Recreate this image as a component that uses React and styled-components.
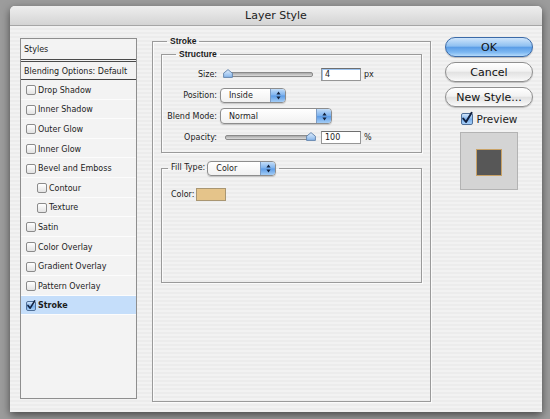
import React from "react";
import styled, { createGlobalStyle } from "styled-components";

const GlobalStyle = createGlobalStyle`
  html, body { margin: 0; padding: 0; }
  body {
    width: 550px;
    height: 419px;
    overflow: hidden;
    background: #9c9c9c;
    font-family: "DejaVu Sans", "Liberation Sans", sans-serif;
    color: #1c1c1c;
  }
`;

const Window = styled.div`
  margin: 6px 0 0 10px;
  width: 532px;
  height: 406px;
  border-radius: 5px 5px 0 0;
  overflow: hidden;
  background: repeating-linear-gradient(to bottom, #f2f2f2 0, #f2f2f2 2px, #ececec 2px, #ececec 4px);
  box-shadow: 0 3px 9px rgba(0, 0, 0, 0.55);
`;

const TitleBar = styled.div`
  height: 19px;
  border-bottom: 1px solid #a6a6a6;
  background: linear-gradient(#eeeeee, #d4d4d4);
  display: flex;
  align-items: center;
  justify-content: center;
  font-size: 11px;
  color: #222;
`;

const Body = styled.div`
  display: flex;
  align-items: flex-start;
  padding: 12px 0 0 10px;
`;

/* ---------- left styles list ---------- */

const StylesList = styled.div`
  flex-shrink: 0;
  width: 117px;
  height: 361px;
  box-sizing: border-box;
  border: 1px solid #8e8e8e;
  background: #f3f3f3;
  font-size: 8px;
`;

const HeaderRow = styled.div`
  display: flex;
  align-items: center;
  box-sizing: border-box;
  padding: 1px 0 0 3px;
  height: ${(p) => (p.$top ? "23px" : "18px")};
  border-bottom: ${(p) => (p.$top ? "3px double #4a4a4a" : "1px solid #444")};
`;

const StyleRow = styled.div`
  display: flex;
  align-items: center;
  box-sizing: border-box;
  height: 19.6px;
  padding: 2px 0 0 ${(p) => (p.$indent ? "16px" : "5px")};
  border-bottom: 1px solid #fcfcfc;
  background: ${(p) => (p.$selected ? "#c5defa" : "transparent")};
  font-weight: ${(p) => (p.$selected ? "bold" : "normal")};
`;

const Box = styled.span`
  flex-shrink: 0;
  position: relative;
  display: inline-block;
  width: ${(p) => p.$size || 8}px;
  height: ${(p) => p.$size || 8}px;
  margin-right: ${(p) => p.$gap || 2}px;
  border: 1px solid ${(p) => (p.$checked ? "#4f6f98" : "#8b8b8b")};
  border-radius: 2px;
  background: ${(p) =>
    p.$checked
      ? "linear-gradient(#d2e6fb, #78afec 55%, #a9d0f8)"
      : "linear-gradient(#ffffff, #e3e3e3)"};
`;

const CheckMark = styled.svg`
  position: absolute;
  left: 0;
  top: -2px;
  overflow: visible;
`;

const Checkbox = ({ checked, size, gap }) => (
  <Box $checked={checked} $size={size} $gap={gap}>
    {checked && (
      <CheckMark width={size || 8} height={(size || 8) + 2} viewBox="0 0 10 12">
        <path d="M1.2 6.5 L4 10 L9.6 0.8" fill="none" stroke="#12213f" strokeWidth="2" strokeLinecap="round" strokeLinejoin="round" />
      </CheckMark>
    )}
  </Box>
);

/* ---------- middle group boxes ---------- */

const Main = styled.div`
  flex-shrink: 0;
  margin: -3px 0 0 15px;
  width: 279px;
`;

const Group = styled.fieldset`
  margin: ${(p) => p.$mt || 0}px 0 0 0;
  padding: 0;
  min-inline-size: 0;
  box-sizing: border-box;
  height: ${(p) => (p.$h ? `${p.$h}px` : "auto")};
  border: 1px solid #9a9a9a;
  box-shadow: inset 1px 1px 0 #fbfbfb, 1px 1px 0 #fbfbfb;
`;

const Legend = styled.legend`
  margin-left: ${(p) => p.$ml}px;
  padding: 0 3px;
  display: flex;
  align-items: center;
  gap: 2px;
  line-height: ${(p) => p.$lh}px;
  font-family: "Liberation Sans", Arial, sans-serif;
  font-weight: bold;
  font-size: 8.5px;
`;

const LegendLabel = styled.span`
  font-family: "DejaVu Sans", sans-serif;
  font-weight: normal;
  font-size: 8px;
`;

const Inner = styled.div`
  padding: 1.5px 8px 0 8px;
`;

const Rows = styled.div`
  display: flex;
  flex-direction: column;
  gap: 5px;
  padding: 6.5px 0 7px 0;
`;

const Row = styled.div`
  display: flex;
  align-items: center;
  height: 16px;
`;

const Label = styled.span`
  width: 55px;
  margin-right: 3px;
  text-align: right;
  font-size: 8px;
  white-space: nowrap;
`;

const SliderWrap = styled.div`
  position: relative;
  width: 99px;
  height: 16px;
  display: flex;
  align-items: center;
`;

const Track = styled.div`
  flex: 1;
  margin: 1px 6px 0 5px;
  height: 3px;
  border-radius: 2px;
  border: 1px solid #8a8a8a;
  background: linear-gradient(#a9a9a9, #dcdcdc);
`;

const Thumb = styled.svg`
  position: absolute;
  top: 3px;
`;

const Slider = ({ pos }) => (
  <SliderWrap>
    <Track />
    <Thumb width="10" height="9" viewBox="0 0 10 9" style={{ left: 3 + pos * 83 }}>
      <defs>
        <linearGradient id="thumbg" x1="0" y1="0" x2="0" y2="1">
          <stop offset="0" stopColor="#e1eefc" />
          <stop offset="1" stopColor="#86b6ec" />
        </linearGradient>
      </defs>
      <path d="M5 0.6 L9.4 4.2 L9.4 8.4 L0.6 8.4 L0.6 4.2 Z" fill="url(#thumbg)" stroke="#5f80a8" strokeWidth="0.9" />
    </Thumb>
  </SliderWrap>
);

const Field = styled.input`
  width: 40px;
  height: 13px;
  box-sizing: border-box;
  margin: 0 0 0 2px;
  padding: 0 3px;
  border: 1px solid #969696;
  border-top-color: #6f6f6f;
  background: #fff;
  font-family: "DejaVu Sans", sans-serif;
  font-size: 8px;
  color: #1c1c1c;
  outline: none;
  box-shadow: ${(p) => (p.$focus ? "inset 1px 0 0 #9cc3ef, inset 0 1px 0 #9cc3ef" : "none")};
`;

const Unit = styled.span`
  margin-left: 3px;
  font-size: 8px;
`;

const SelectBox = styled.div`
  width: ${(p) => p.$w}px;
  height: ${(p) => p.$h || 16}px;
  box-sizing: border-box;
  display: flex;
  align-items: stretch;
  overflow: hidden;
  border: 1px solid #8d8d8d;
  border-radius: 4px;
  background: linear-gradient(#ffffff, #f1f1f1);
  box-shadow: 0 1px 1px rgba(0, 0, 0, 0.18);
  font-family: "DejaVu Sans", sans-serif;
  font-weight: normal;
  font-size: 8px;
  line-height: normal;
`;

const SelectText = styled.span`
  flex: 1;
  display: flex;
  align-items: center;
  padding-left: 8px;
`;

const SelectArrows = styled.span`
  width: 14px;
  display: flex;
  align-items: center;
  justify-content: center;
  border-left: 1px solid #7d9cc4;
  background: linear-gradient(#c3ddf8, #7db2ee 48%, #5b9be6 52%, #a4cdf6);
`;

const Select = ({ value, w, h }) => (
  <SelectBox $w={w} $h={h}>
    <SelectText>{value}</SelectText>
    <SelectArrows>
      <svg width="5" height="9" viewBox="0 0 5 9">
        <path d="M2.5 0.5 L4.6 3.4 L0.4 3.4 Z M2.5 8.5 L4.6 5.6 L0.4 5.6 Z" fill="#13233f" />
      </svg>
    </SelectArrows>
  </SelectBox>
);

const FillBody = styled.div`
  height: 106px;
  box-sizing: border-box;
  padding: 12px 9px 0 9px;
  display: flex;
  align-items: flex-start;
  font-size: 8px;
`;

const ColorLabel = styled.span`
  line-height: 13px;
  margin-right: 2px;
`;

const Swatch = styled.span`
  width: 30px;
  height: 13px;
  box-sizing: border-box;
  border: 1px solid #a99672;
  background: ${(p) => p.$color};
`;

/* ---------- right column ---------- */

const Side = styled.div`
  flex-shrink: 0;
  margin: -1px 0 0 14px;
  width: 88px;
  display: flex;
  flex-direction: column;
  align-items: center;
  gap: 5px;
`;

const Button = styled.button`
  width: 88px;
  height: 20px;
  padding: 0;
  border-radius: 10px;
  font-family: "DejaVu Sans", sans-serif;
  font-size: 11px;
  color: #111;
  border: 1px solid ${(p) => (p.$primary ? "#3b6aa8" : "#8f8f8f")};
  background: ${(p) =>
    p.$primary
      ? "linear-gradient(#cfe5fb 0%, #8fc0f1 45%, #5b9de7 52%, #7fb9f2 80%, #b4dafb 100%)"
      : "linear-gradient(#ffffff 0%, #f2f2f2 45%, #e2e2e2 52%, #efefef 80%, #fbfbfb 100%)"};
  box-shadow: 0 1px 1px rgba(0, 0, 0, 0.22);
`;

const PreviewRow = styled.div`
  margin-top: 1px;
  display: flex;
  align-items: center;
  height: 12px;
  font-size: 10.5px;
`;

const PreviewSwatch = styled.div`
  margin-top: 2px;
  width: 58px;
  height: 58px;
  box-sizing: border-box;
  border: 1px solid #b3b3b3;
  background: #d4d4d4;
  display: flex;
  align-items: center;
  justify-content: center;
`;

const PreviewInner = styled.div`
  width: 26px;
  height: 27px;
  margin-top: 2px;
  box-sizing: border-box;
  border: 1px solid #c9a266;
  background: #575757;
`;

const styleItems = [
  { name: "Drop Shadow" },
  { name: "Inner Shadow" },
  { name: "Outer Glow" },
  { name: "Inner Glow" },
  { name: "Bevel and Emboss" },
  { name: "Contour", indent: true },
  { name: "Texture", indent: true },
  { name: "Satin" },
  { name: "Color Overlay" },
  { name: "Gradient Overlay" },
  { name: "Pattern Overlay" },
  { name: "Stroke", checked: true, selected: true },
];

export default function App() {
  return (
    <>
      <GlobalStyle />
      <Window>
        <TitleBar>Layer Style</TitleBar>
        <Body>
          <StylesList>
            <HeaderRow $top>Styles</HeaderRow>
            <HeaderRow>Blending Options: Default</HeaderRow>
            {styleItems.map((it) => (
              <StyleRow key={it.name} $indent={it.indent} $selected={it.selected}>
                <Checkbox checked={it.checked} />
                {it.name}
              </StyleRow>
            ))}
          </StylesList>

          <Main>
            <Group $h={367}>
              <Legend $ml={14} $lh={12}>Stroke</Legend>
              <Inner>
                <Group>
                  <Legend $ml={14} $lh={11}>Structure</Legend>
                  <Rows>
                    <Row>
                      <Label>Size:</Label>
                      <Slider pos={0} />
                      <Field $focus defaultValue="4" readOnly />
                      <Unit>px</Unit>
                    </Row>
                    <Row>
                      <Label>Position:</Label>
                      <Select value="Inside" w={66} h={15} />
                    </Row>
                    <Row>
                      <Label>Blend Mode:</Label>
                      <Select value="Normal" w={112} />
                    </Row>
                    <Row>
                      <Label>Opacity:</Label>
                      <Slider pos={1} />
                      <Field defaultValue="100" readOnly />
                      <Unit>%</Unit>
                    </Row>
                  </Rows>
                </Group>
                <Group $mt={7}>
                  <Legend $ml={6} $lh={16}>
                    <LegendLabel>Fill Type:</LegendLabel>
                    <Select value="Color" w={69} h={15} />
                  </Legend>
                  <FillBody>
                    <ColorLabel>Color:</ColorLabel>
                    <Swatch $color="#e5c48a" />
                  </FillBody>
                </Group>
              </Inner>
            </Group>
          </Main>

          <Side>
            <Button $primary>OK</Button>
            <Button>Cancel</Button>
            <Button>New Style...</Button>
            <PreviewRow>
              <Checkbox checked size={10} gap={4} />
              Preview
            </PreviewRow>
            <PreviewSwatch>
              <PreviewInner />
            </PreviewSwatch>
          </Side>
        </Body>
      </Window>
    </>
  );
}
